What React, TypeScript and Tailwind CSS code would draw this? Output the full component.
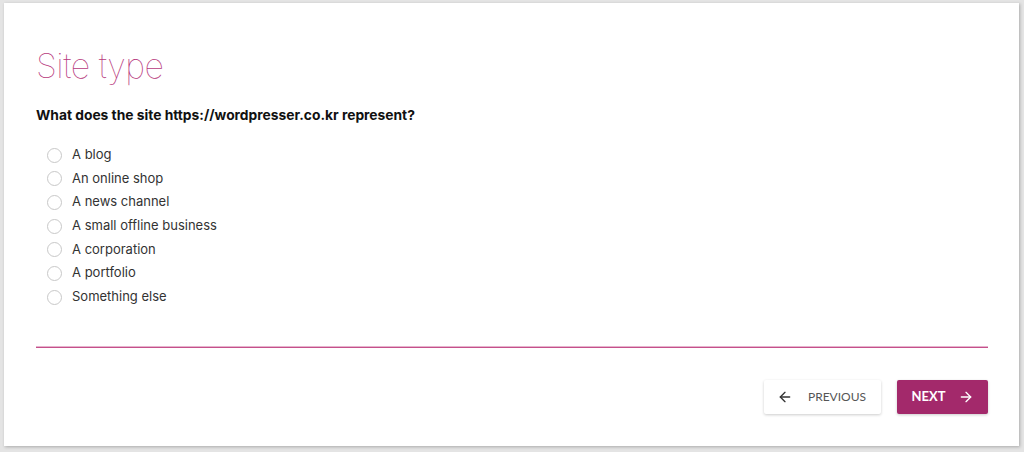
import { ArrowLeft, ArrowRight } from 'lucide-react'

const options = [
  'A blog',
  'An online shop',
  'A news channel',
  'A small offline business',
  'A corporation',
  'A portfolio',
  'Something else',
]

export default function App() {
  return (
    <div className="w-[1024px] h-[452px] bg-[#e4e4e4] pl-[4px] pt-[3px] font-['Inter',sans-serif]">
      <div className="w-[1015px] h-[443px] bg-white shadow-[1px_1px_3px_rgba(0,0,0,0.25)] px-[32px] pt-[39px]">
        <h1 className="text-[34px] leading-[48px] font-thin text-[#b7387c] tracking-[-0.5px]">Site type</h1>
        <p className="mt-[16px] text-[13.8px] leading-[18px] font-bold text-[#111]">
          What does the site https://wordpresser.co.kr represent?
        </p>
        <div className="mt-[19px] flex flex-col pl-[11px]">
          {options.map((option, i) => (
            <label
              key={option}
              className={`flex items-center gap-[10px] text-[13px] text-[#333] ${i === 1 || i === 4 ? 'h-[23px]' : 'h-[24px]'}`}
            >
              <span className="w-[15px] h-[15px] rounded-full border border-[#c8c8c8] bg-white"></span>
              {option}
            </label>
          ))}
        </div>
        {/* divider, soft top edge */}
        <div className="mt-[37px] h-0 border-t border-b border-t-[#e6b3cd] border-b-[#c5508b] w-[952px]"></div>
        <div className="mt-[32px] w-[952px] flex justify-end gap-[16px] font-['Lato',sans-serif]">
          <button className="h-[34px] w-[117px] flex items-center justify-center gap-[15px] bg-white rounded-[2px] shadow-[0_1px_3px_rgba(0,0,0,0.2)] text-[12px] text-[#555] pr-[2px]">
            <ArrowLeft size={16} strokeWidth={2} className="text-[#333]" />
            PREVIOUS
          </button>
          <button className="h-[34px] w-[91px] flex items-center justify-center gap-[12px] bg-[#a3296b] rounded-[2px] shadow-[0_1px_3px_rgba(0,0,0,0.2)] text-[13px] font-bold text-white">
            NEXT
            <ArrowRight size={16} strokeWidth={2} />
          </button>
        </div>
      </div>
    </div>
  )
}
